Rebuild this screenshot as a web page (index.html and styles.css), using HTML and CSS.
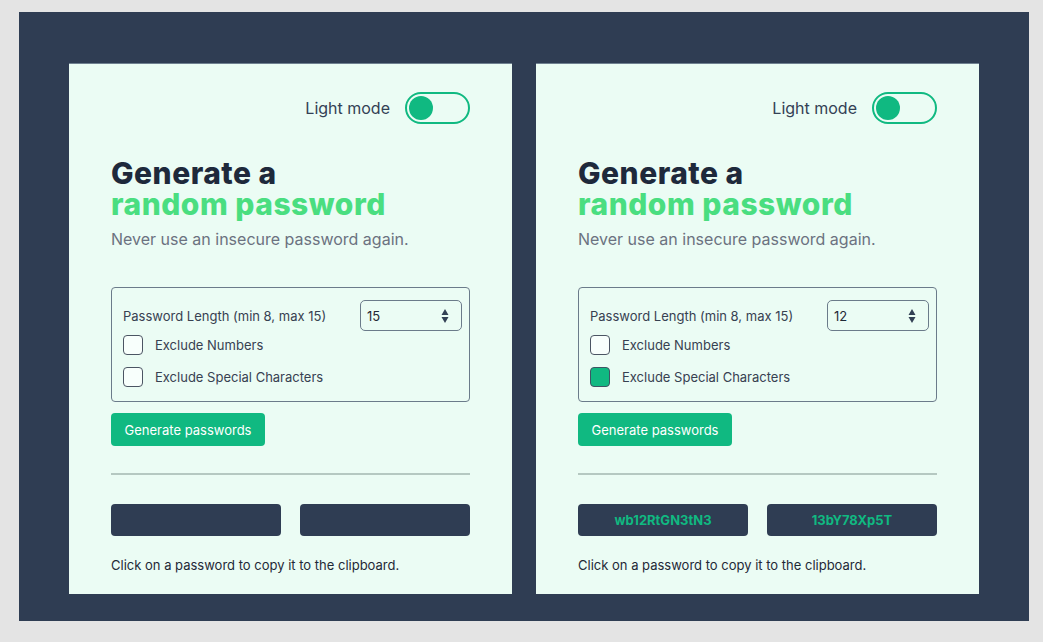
FILE: index.html
```html
<!DOCTYPE html>
<html lang="en">
<head>
<meta charset="utf-8">
<title>Password Generator</title>
<link rel="stylesheet" href="styles.css">
</head>
<body>
<div class="frame">
  <section class="card">
    <div class="mode-row">
      <span class="mode-label">Light mode</span>
      <span class="toggle"><span class="knob"></span></span>
    </div>
    <h1 class="title"><span class="line">Generate a</span><span class="line accent">random password</span></h1>
    <p class="subtitle">Never use an insecure password again.</p>
    <div class="options">
      <div class="length-row">
        <span class="opt-label">Password Length (min 8, max 15)</span>
        <div class="num-input"><span>15</span>
          <svg class="spin" width="8" height="16" viewBox="0 0 8 16"><path d="M4 1 L7.5 7 L0.5 7 Z M4 15 L7.5 9 L0.5 9 Z" fill="#334155"/></svg>
        </div>
      </div>
      <label class="check-row"><span class="box"></span><span class="opt-label">Exclude Numbers</span></label>
      <label class="check-row"><span class="box"></span><span class="opt-label">Exclude Special Characters</span></label>
    </div>
    <button class="gen-btn">Generate passwords</button>
    <hr class="divider">
    <div class="pw-row">
      <div class="pw"></div>
      <div class="pw"></div>
    </div>
    <p class="hint">Click on a password to copy it to the clipboard.</p>
  </section>

  <section class="card">
    <div class="mode-row">
      <span class="mode-label">Light mode</span>
      <span class="toggle"><span class="knob"></span></span>
    </div>
    <h1 class="title"><span class="line">Generate a</span><span class="line accent">random password</span></h1>
    <p class="subtitle">Never use an insecure password again.</p>
    <div class="options">
      <div class="length-row">
        <span class="opt-label">Password Length (min 8, max 15)</span>
        <div class="num-input"><span>12</span>
          <svg class="spin" width="8" height="16" viewBox="0 0 8 16"><path d="M4 1 L7.5 7 L0.5 7 Z M4 15 L7.5 9 L0.5 9 Z" fill="#334155"/></svg>
        </div>
      </div>
      <label class="check-row"><span class="box"></span><span class="opt-label">Exclude Numbers</span></label>
      <label class="check-row"><span class="box checked"></span><span class="opt-label">Exclude Special Characters</span></label>
    </div>
    <button class="gen-btn">Generate passwords</button>
    <hr class="divider">
    <div class="pw-row">
      <div class="pw">wb12RtGN3tN3</div>
      <div class="pw">13bY78Xp5T</div>
    </div>
    <p class="hint">Click on a password to copy it to the clipboard.</p>
  </section>
</div>
</body>
</html>
```

FILE: styles.css
```css
* { box-sizing: border-box; }

body {
  margin: 0;
  background: #e4e4e4;
  font-family: Inter, "Noto Sans", sans-serif;
  width: 1043px;
  height: 642px;
  overflow: hidden;
}

.frame {
  margin: 12px 0 0 19px;
  width: 1010px;
  height: 609px;
  background: #2f3d53;
  padding: 51px 49px 27px 50px;
  display: flex;
  gap: 24px;
}

.card {
  width: 443px;
  height: 531px;
  background: #ebfcf4;
  border-top: 1px solid #6f8090;
  padding: 28px 42px 0 42px;
  display: flex;
  flex-direction: column;
}

.mode-row {
  display: flex;
  justify-content: flex-end;
  align-items: center;
  gap: 15px;
  height: 32px;
}

.mode-label {
  font-size: 16px;
  color: #334155;
}

.toggle {
  width: 65px;
  height: 32px;
  border: 2px solid #10b981;
  border-radius: 16px;
  display: flex;
  align-items: center;
  padding-left: 2px;
}

.knob {
  width: 24px;
  height: 24px;
  border-radius: 50%;
  background: #10b981;
}

.title {
  margin: 34px 0 0 0;
  font-size: 30px;
  font-weight: 800;
  color: #1e293b;
  letter-spacing: 0.5px;
  display: flex;
  flex-direction: column;
}

.title .line {
  display: block;
  height: 30px;
  line-height: 30px;
}

.title .line + .line {
  margin-top: 1px;
}

.accent {
  color: #4ade80;
}

.subtitle {
  margin: 10px 0 0 0;
  font-size: 16px;
  line-height: 20px;
  color: #6b7280;
}

.options {
  margin-top: 38px;
  border: 1px solid #6b7b8a;
  border-radius: 4px;
  padding: 12px 7px 14px 11px;
  display: flex;
  flex-direction: column;
}

.length-row {
  display: flex;
  justify-content: space-between;
  align-items: center;
  height: 31px;
  margin-bottom: 4px;
}

.opt-label {
  font-size: 13px;
  color: #374151;
}

.num-input {
  width: 102px;
  height: 31px;
  border: 1px solid #6b7b8a;
  border-radius: 5px;
  display: flex;
  align-items: center;
  justify-content: space-between;
  padding: 0 12px 0 6px;
  font-size: 13px;
  color: #1f2937;
}

.spin { display: block; }

.check-row {
  display: flex;
  align-items: center;
  gap: 12px;
  height: 20px;
}

.check-row + .check-row {
  margin-top: 12px;
}

.box {
  width: 20px;
  height: 20px;
  border: 1.5px solid #4b5563;
  border-radius: 4px;
  background: #f8fffc;
}

.box.checked {
  background: #10b981;
  border-color: #3f5564;
}

.gen-btn {
  align-self: flex-start;
  margin-top: 11px;
  width: 154px;
  height: 33px;
  border: none;
  border-radius: 4px;
  background: #10b981;
  color: #ffffff;
  font-family: Inter, "Noto Sans", sans-serif;
  font-size: 13px;
  padding: 0;
}

.divider {
  margin: 27px 0 0 0;
  border: none;
  height: 2px;
  background: #b5c8c1;
}

.pw-row {
  margin-top: 29px;
  display: flex;
  justify-content: space-between;
}

.pw {
  width: 170px;
  height: 32px;
  border-radius: 4px;
  background: #2f3d53;
  color: #10b981;
  font-size: 13px;
  font-weight: 700;
  display: flex;
  align-items: center;
  justify-content: center;
}

.hint {
  margin: 21px 0 0 0;
  font-size: 13px;
  line-height: 16px;
  color: #1f2937;
}
```
